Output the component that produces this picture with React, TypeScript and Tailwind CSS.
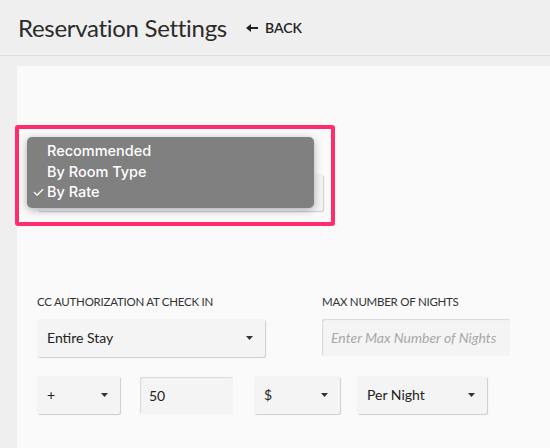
import React from 'react';

const font = { fontFamily: 'Lato, "Open Sans", sans-serif' };

function Caret() {
  return (
    <svg width="7" height="4" viewBox="0 0 7 4" className="shrink-0">
      <path d="M0 0h7L3.5 4z" fill="#333" />
    </svg>
  );
}

function Select({ label, width }: { label: string; width: string }) {
  return (
    <div
      className={`${width} h-[38px] flex items-center justify-between pl-[10px] pr-[12px] bg-[#f4f4f4] rounded-[2px] shadow-[1px_1px_1px_rgba(0,0,0,0.18)] text-[14px] text-[#222]`}
    >
      <span className="-mt-[1px]">{label}</span>
      <Caret />
    </div>
  );
}

function Input({ value, placeholder, width }: { value?: string; placeholder?: string; width: string }) {
  return (
    <div
      className={`${width} h-[37px] flex items-center px-[9px] bg-[#f4f4f4] rounded-[2px] shadow-[inset_1px_1px_1px_rgba(0,0,0,0.12)] text-[14px] text-[#222]`}
    >
      {value ? <span>{value}</span> : <span className="italic text-[14px] text-[#a8a8a8] whitespace-nowrap">{placeholder}</span>}
    </div>
  );
}

export default function App() {
  return (
    <div className="w-full h-[448px] overflow-hidden bg-[#efefef] flex flex-col" style={font}>
      {/* Header */}
      <div className="h-[56px] shrink-0 flex items-center pl-[18px] border-b border-[#dedede]">
        <h1 className="text-[24px] tracking-[-0.3px] text-[#2b2b2b] leading-none">Reservation Settings</h1>
        <div className="ml-[19px] flex items-center gap-[7px] text-[14px] font-semibold text-[#222]">
          <svg width="12" height="8" viewBox="0 0 12 8">
            <path d="M0 4L5 0v3h7v2H5v3z" fill="#222" />
          </svg>
          <span>BACK</span>
        </div>
      </div>

      {/* Panel */}
      <div className="relative mt-[10px] ml-[17px] flex-1 bg-[#fafafa] pl-[20px] pt-[108px]">
        {/* select hidden behind the open menu */}
        <div className="w-[286px] h-[37px] bg-[#f4f4f4] rounded-[2px] shadow-[1px_1px_1px_rgba(0,0,0,0.18)]" />

        <div className="mt-[83px] flex gap-[57px]">
          <div className="flex flex-col gap-[9px]">
            <span className="text-[11.5px] tracking-[-0.25px] leading-[16px] text-[#333] uppercase">CC Authorization at Check In</span>
            <Select label="Entire Stay" width="w-[228px]" />
          </div>
          <div className="flex flex-col gap-[9px]">
            <span className="text-[11.5px] tracking-[-0.25px] leading-[16px] text-[#333] uppercase">Max Number of Nights</span>
            <Input placeholder="Enter Max Number of Nights" width="w-[188px]" />
          </div>
        </div>

        <div className="mt-[19px] flex items-center">
          <Select label="+" width="w-[83px]" />
          <div className="ml-[20px]">
            <Input value="50" width="w-[93px]" />
          </div>
          <div className="ml-[21px]">
            <Select label="$" width="w-[86px]" />
          </div>
          <div className="ml-[17px]">
            <Select label="Per Night" width="w-[130px]" />
          </div>
        </div>

        {/* highlight annotation */}
        <div className="absolute left-[-2px] top-[59px] w-[320px] h-[101px] border-[4px] border-[#ff2d6b] rounded-[3px]" />

        {/* open dropdown menu */}
        <div className="absolute left-[10px] top-[71px] w-[287px] h-[71px] bg-[#808080] rounded-[5px] shadow-[0_2px_8px_rgba(0,0,0,0.3)] pt-[4px] text-white text-[14.5px] font-medium leading-[20.5px]" style={{ fontFamily: 'Inter, "Open Sans", sans-serif' }}>
          <div className="pl-[20px]">Recommended</div>
          <div className="pl-[20px]">By Room Type</div>
          <div className="relative pl-[20px]">
            <span className="absolute left-[5px] font-normal">✓</span>
            By Rate
          </div>
        </div>
      </div>
    </div>
  );
}
